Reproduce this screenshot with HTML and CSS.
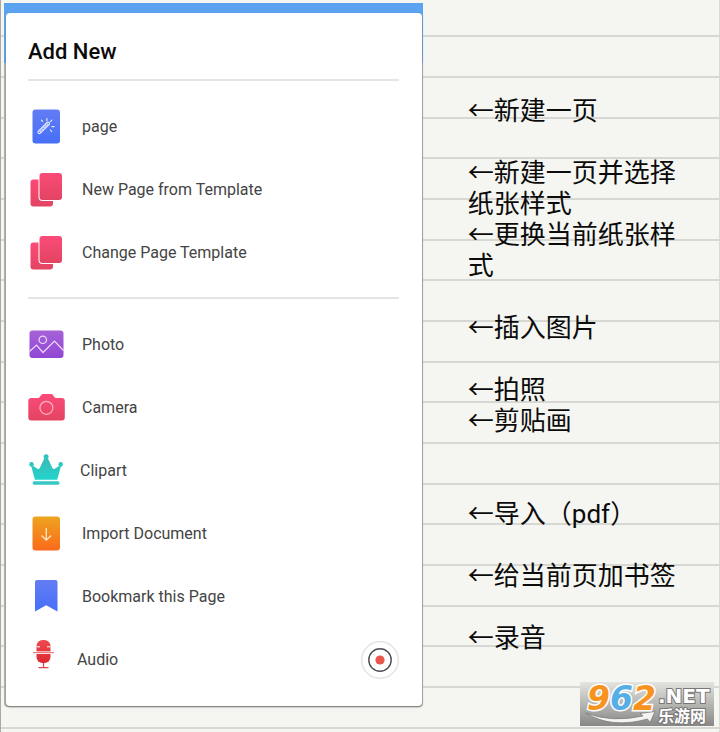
FILE: index.html
```html
<!DOCTYPE html>
<html lang="zh-CN">
<head>
<meta charset="utf-8">
<meta name="viewport" content="width=device-width, initial-scale=1">
<title>Add New</title>
<link rel="stylesheet" href="styles.css">
</head>
<body>
<svg class="defs" aria-hidden="true">
  <defs>
    <linearGradient id="blue" x1="0" y1="0" x2="0" y2="1"><stop offset="0" stop-color="#637df3"/><stop offset="1" stop-color="#466ff8"/></linearGradient>
    <linearGradient id="pink" x1="0" y1="0" x2="0" y2="1"><stop offset="0" stop-color="#fb4b78"/><stop offset="1" stop-color="#e34462"/></linearGradient>
    <linearGradient id="purple" x1="0" y1="0" x2="0" y2="1"><stop offset="0" stop-color="#a662d8"/><stop offset="1" stop-color="#9146d4"/></linearGradient>
    <linearGradient id="teal" x1="0" y1="0" x2="0" y2="1"><stop offset="0" stop-color="#3cb9b4"/><stop offset="1" stop-color="#20d5cd"/></linearGradient>
    <linearGradient id="orange" x1="0" y1="0" x2="0" y2="1"><stop offset="0" stop-color="#eda51f"/><stop offset="1" stop-color="#fb691c"/></linearGradient>
    <linearGradient id="red" x1="0" y1="0" x2="0" y2="1"><stop offset="0" stop-color="#ee4a4f"/><stop offset="1" stop-color="#dc2730"/></linearGradient>
    <symbol id="copies" viewBox="0 0 37 37">
      <rect x="2.500" y="8.500" width="22.500" height="27" rx="3" fill="url(#pink)"/>
      <rect x="10.500" y="1" width="24.500" height="29" rx="4" fill="#fff"/>
      <rect x="11.500" y="2" width="22.500" height="27" rx="3" fill="url(#pink)"/>
    </symbol>
  </defs>
</svg>
<main class="page">
  <div class="screen">
    <section class="panel" aria-labelledby="panel-title">
      <h1 class="panel-title" id="panel-title">Add New</h1>
      <ul class="menu">
        <li><button class="item" type="button">
          <svg class="icon" viewBox="0 0 37 37"><rect x="4.500" y="1.500" width="27.500" height="34" rx="3" fill="url(#blue)"/><g fill="none" stroke="#e4ebff" stroke-width="1.200" stroke-linecap="round"><path d="M10.400 23.200l8.700-8.700a1.300 1.300 0 0 1 2 0a1.300 1.300 0 0 1 0 2l-8.700 8.700a1.400 1.400 0 0 1-2-2z"/><path d="M12 23.600l7.500-7.500" stroke-dasharray="1 1.600"/><path d="M18.900 10.500v2.200M13.500 12.200l1 1.200M23.700 12.200l-1 1.200M23.900 18.600h2.300M22.400 22l1.200 1.500"/></g></svg>
          <span>page</span></button></li>
        <li><button class="item" type="button"><svg class="icon"><use href="#copies"/></svg><span>New Page from Template</span></button></li>
        <li><button class="item" type="button"><svg class="icon"><use href="#copies"/></svg><span>Change Page Template</span></button></li>
      </ul>
      <ul class="menu">
        <li><button class="item" type="button">
          <svg class="icon" viewBox="0 0 37 37"><rect x="1.500" y="4.500" width="34" height="27.500" rx="3" fill="url(#purple)"/><g fill="none" stroke="#efd9fb" stroke-width="1.200"><circle cx="14.800" cy="13.800" r="3.700"/><path d="M1.500 25.500l7-6.500 6.500 7.500L26.500 15l9 9.500"/></g></svg>
          <span>Photo</span></button></li>
        <li><button class="item" type="button">
          <svg class="icon" viewBox="0 0 37 37"><path d="M3.300 9h6.500q1.400 0 2.200-1.200l1-1.600q.8-1.200 2.300-1.200h7.500q1.500 0 2.300 1.200l1 1.600q.8 1.200 2.200 1.200H33.800a3 3 0 0 1 3 3v16.500a3 3 0 0 1-3 3H3.300a3 3 0 0 1-3-3V12a3 3 0 0 1 3-3z" fill="url(#pink)"/><circle cx="18.400" cy="18.800" r="6.500" fill="none" stroke="#ffb5c6" stroke-width="1.200"/></svg>
          <span>Camera</span></button></li>
        <li><button class="item" type="button">
          <svg class="icon icon-crown" viewBox="0 0 35 37"><g fill="url(#teal)"><path d="M2.800 12.500l6.700 4.200q1.600.9 2.400-.9L16.500 6h3.200l4.600 9.800q.8 1.800 2.400.9l6.700-4.200-4.200 15.300H6.900z"/><circle cx="18.100" cy="4.800" r="2.500"/><circle cx="3.500" cy="12.400" r="2.300"/><circle cx="32.700" cy="12.400" r="2.300"/></g><rect x="4.600" y="29.200" width="27" height="3.500" rx="1.700" fill="#38c8c4"/></svg>
          <span>Clipart</span></button></li>
        <li><button class="item" type="button">
          <svg class="icon" viewBox="0 0 37 37"><rect x="4.500" y="1.500" width="27.500" height="34" rx="3" fill="url(#orange)"/><path d="M18.300 13v12M13.500 20.500l4.800 4.700 4.800-4.700" fill="none" stroke="#ffe9c5" stroke-width="1.300"/></svg>
          <span>Import Document</span></button></li>
        <li><button class="item" type="button">
          <svg class="icon" viewBox="0 0 37 37"><path d="M9 2H27.500a2 2 0 0 1 2 2v29.500l-11.300-6.200L7 33.500V4a2 2 0 0 1 2-2z" fill="url(#blue)"/></svg>
          <span>Bookmark this Page</span></button></li>
        <li class="audio"><button class="item" type="button">
          <svg class="icon icon-mic" viewBox="0 0 32 37"><rect x="8.500" y="3" width="14" height="23" rx="6" fill="url(#red)"/><path d="M8.500 9.800h3.500M19 9.800h3.500" stroke="#fff" stroke-width="1"/><path d="M5 15.700h21" stroke="#fff" stroke-width="2.600"/><path d="M5 15.700h21" stroke="#df5e60" stroke-width="1"/><path d="M15.500 26v4.500M10.500 30.600h10" stroke="#d6494d" stroke-width="1.300"/></svg>
          <span>Audio</span></button>
          <button class="record" type="button" aria-label="Record"><svg class="record-icon" viewBox="0 0 38 38"><circle cx="19" cy="19" r="18.300" fill="#fff" stroke="#dededc" stroke-width="1.200"/><circle cx="19" cy="19" r="11.200" fill="#fff" stroke="#4d4f52" stroke-width="1.400"/><circle cx="19" cy="19" r="4.600" fill="#e8574c"/></svg></button></li>
      </ul>
    </section>
  </div>
  <ul class="notes">
    <li>←新建一页</li>
    <li class="gap">←新建一页并选择纸张样式</li>
    <li>←更换当前纸张样式</li>
    <li class="gap">←插入图片</li>
    <li class="gap">←拍照</li>
    <li>←剪贴画</li>
    <li class="gap-wide">←导入（<span class="latin">pdf</span>）</li>
    <li class="gap">←给当前页加书签</li>
    <li class="gap">←录音</li>
  </ul>
  <svg class="watermark" viewBox="0 0 134 44" role="img" aria-label="962.NET 乐游网">
    <defs><linearGradient id="plate" x1="0" y1="0" x2="0" y2="1"><stop offset="0" stop-color="#e3e3df"/><stop offset="1" stop-color="#888886"/></linearGradient></defs>
    <rect width="134" height="44" fill="url(#plate)"/>
    <path d="M6 31q26 10 57 3l-3-2.500 15-2-5 11-2.500-3.500Q31 47 6 31z" fill="#f4f4f2" stroke="#777" stroke-width=".7"/>
    <text class="mark-digits" x="7" y="28"><tspan fill="#f7931e">9</tspan><tspan fill="#55aee6">6</tspan><tspan fill="#f7931e">2</tspan></text>
    <text class="mark-net" x="78" y="21">.NET</text>
    <text class="mark-name" x="78" y="40">乐游网</text>
  </svg>
</main>
</body>
</html>
```
FILE: styles.css
```css
* {
  box-sizing: border-box;
}

body {
  margin: 0;
  background: #f5f6f1;
}

ul {
  list-style: none;
  margin: 0;
  padding: 0;
}

button {
  border: 0;
  padding: 0;
  background: none;
  color: inherit;
  font: inherit;
  cursor: pointer;
}

.defs {
  position: absolute;
  width: 0;
  height: 0;
}

/* Ruled paper: three rules in every 122px */
.page {
  position: relative;
  display: grid;
  grid-template-columns: 423fr 297fr;
  min-height: 100vh;
  border-left: 1px solid #a9aaa5;
  border-right: 1px solid #d9dad5;
  background: linear-gradient(
    transparent 35px, #d7d8d3 35px, #d7d8d3 37px,
    transparent 37px, transparent 76px, #d7d8d3 76px, #d7d8d3 78px,
    transparent 78px, transparent 117px, #d7d8d3 117px, #d7d8d3 119px,
    transparent 119px) 0 0 / 100% 122px;
}

.screen {
  align-self: start;
  margin: 3px 0 0 3px;
  padding: 10px 1px 1px 2px;
  border-radius: 0 0 4px 4px;
  background: linear-gradient(#5ba3f0 60px, #b4b5af 60px);
}

.panel {
  padding: 25px 23px 15px 22px;
  border-radius: 4px;
  background: #fff;
  box-shadow: 0 1px 2px #777873;
  color: #444;
  font: 16px/24px Roboto, sans-serif;
}

.panel-title {
  margin: 0;
  color: #0b0b0b;
  font-size: 22px;
  font-weight: 500;
  line-height: 28px;
}

.menu {
  margin-top: 13px;
  padding-top: 14px;
  border-top: 2px solid #e4e4e4;
}

.item {
  display: flex;
  align-items: center;
  gap: 17px;
  width: 100%;
  height: 63px;
  text-align: left;
}

.icon {
  flex: none;
  width: 37px;
  height: 37px;
}

.icon-crown {
  width: 35px;
}

.icon-mic {
  width: 32px;
  margin-bottom: 8px;
}

.audio {
  display: flex;
  align-items: center;
}

.record {
  flex: none;
  height: 38px;
}

.record-icon {
  display: block;
  width: 38px;
  height: 38px;
}

.notes {
  padding: 93px 38px 0 45px;
  color: #0b0b0b;
  font: 26px/31px "Noto Sans CJK SC", sans-serif;
}

.latin {
  font-family: Roboto, sans-serif;
  line-height: 1;
}

.gap {
  margin-top: 31px;
}

.gap-wide {
  margin-top: 62px;
}

.watermark {
  position: absolute;
  right: 5px;
  bottom: 6px;
  width: 134px;
  height: 44px;
  overflow: visible;
}

.mark-digits {
  font: italic bold 33px "DejaVu Sans", sans-serif;
  paint-order: stroke;
  stroke: #fff;
  stroke-width: 3px;
}

.mark-net {
  font: bold 20px "DejaVu Sans", sans-serif;
}

.mark-name {
  font: bold 16px "Noto Sans CJK SC", sans-serif;
}

.mark-net,
.mark-name {
  fill: #fff;
  paint-order: stroke;
  stroke: #777;
  stroke-width: 2px;
}
```
